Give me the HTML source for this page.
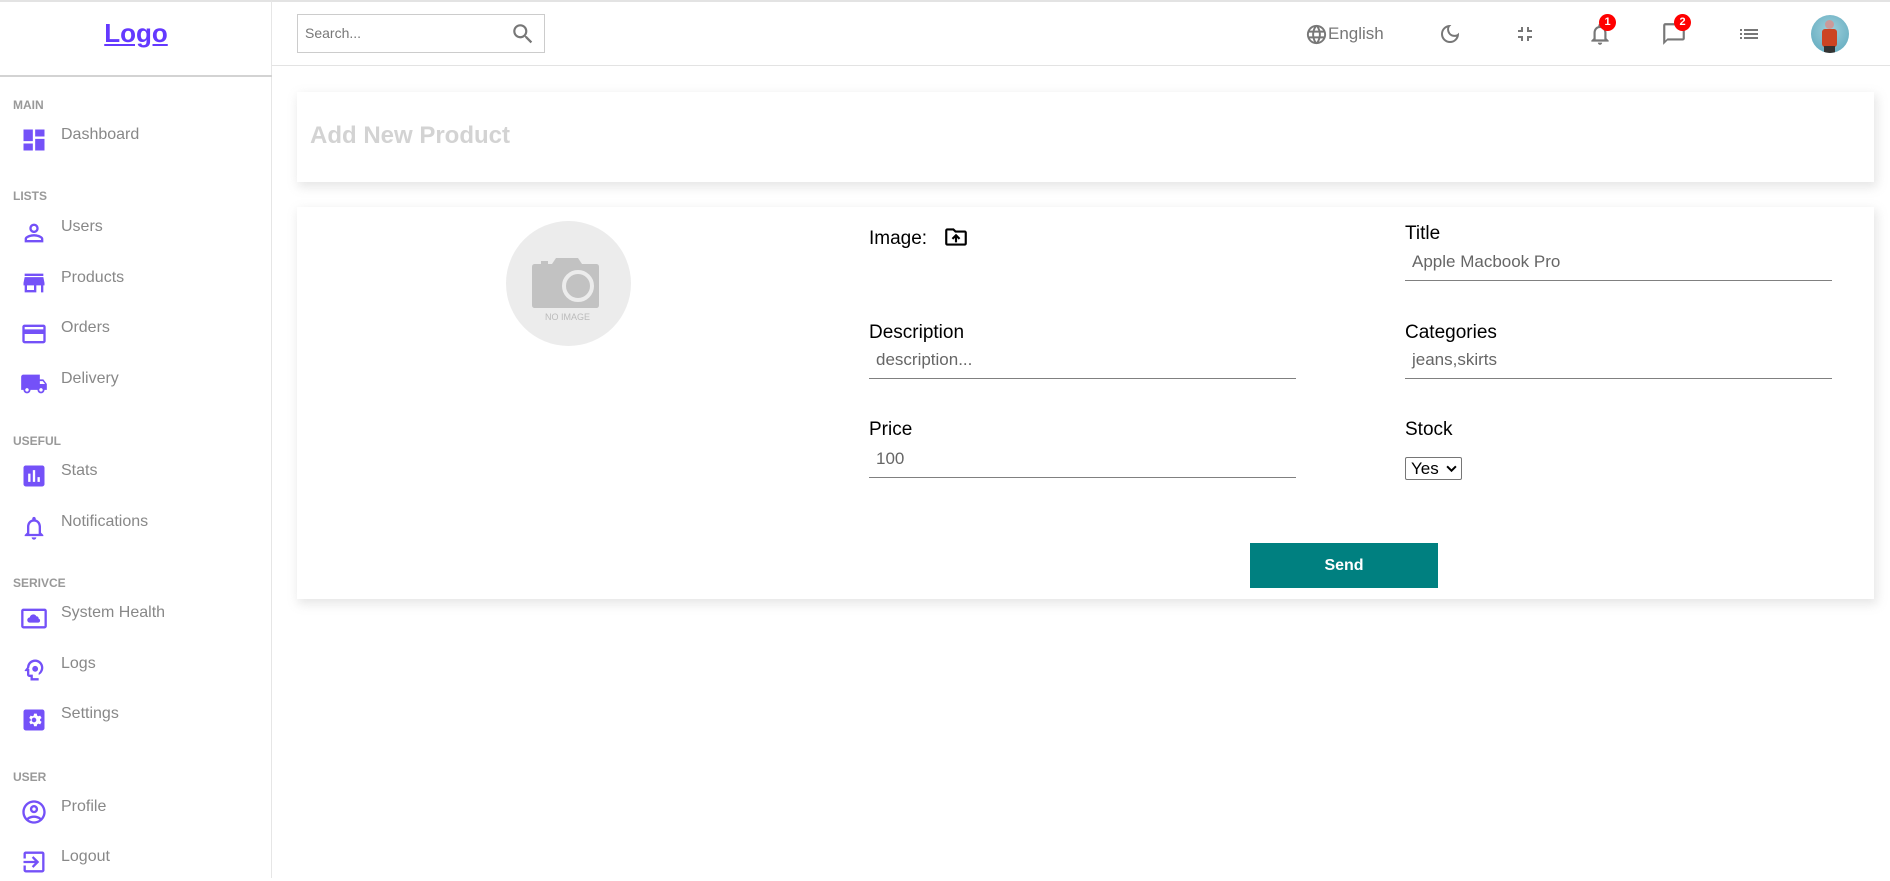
<!DOCTYPE html>
<html><head><meta charset="utf-8">
<style>
*{box-sizing:border-box;margin:0;padding:0}
body{width:1890px;height:878px;overflow:hidden;background:#fff;font-family:"Liberation Sans",sans-serif;position:relative}
.abs{position:absolute}
.sb{left:0;top:0;width:272px;height:878px;border-right:1px solid #e6e6e6;border-top:2px solid #e3e3e3}
.logo{left:0;width:272px;top:18px;text-align:center;font-size:26px;font-weight:bold;color:#6439ff;text-decoration:underline}
.sec{left:13px;font-size:12px;font-weight:bold;color:#999}
.item{left:61px;font-size:16px;color:#888}
.ic{left:20px;width:28px;height:28px}
.ic svg{width:28px;height:28px;fill:#7451f8}
.top{left:272px;top:0;width:1618px;height:66px;border-top:2px solid #e3e3e3;border-bottom:1px solid #e3e3e3}
.search{left:297px;top:14px;width:248px;height:39px;border:1px solid #ccc}
.tico svg{width:26px;height:26px;fill:#777}
.badge{width:17px;height:17px;border-radius:50%;background:#f00;color:#fff;font-size:11px;font-weight:bold;text-align:center;line-height:17px}
.card{background:#fff;box-shadow:2px 4px 10px 1px rgba(201,201,201,.47)}
.lbl{font-size:19px;color:#000}
.inp{font-size:17px;color:#666;width:427px;border-bottom:1px solid #808080;padding-left:7px;height:30px;line-height:22px}
</style></head><body>
<div class="abs sb"></div>
<div class="abs logo">Logo</div>
<div class="abs" style="left:0;top:75px;width:272px;height:2px;background:#d3d3d3"></div>

<div class="abs sec" style="top:98px">MAIN</div>
<div class="abs ic" style="top:126px"><svg viewBox="0 0 24 24"><path d="M3 13h8V3H3v10zm0 8h8v-6H3v6zm10 0h8V11h-8v10zm0-18v6h8V3h-8z"/></svg></div>
<div class="abs item" style="top:126px">Dashboard</div>

<div class="abs sec" style="top:189px">LISTS</div>
<div class="abs ic" style="top:219px"><svg viewBox="0 0 24 24"><path d="M12 6c1.1 0 2 .9 2 2s-.9 2-2 2-2-.9-2-2 .9-2 2-2m0 9c2.7 0 5.8 1.29 6 2v1H6v-.99c.2-.72 3.3-2.01 6-2.01M12 4C9.79 4 8 5.79 8 8s1.79 4 4 4 4-1.79 4-4-1.79-4-4-4zm0 9c-2.67 0-8 1.34-8 4v3h16v-3c0-2.66-5.33-4-8-4z"/></svg></div>
<div class="abs item" style="top:218px">Users</div>
<div class="abs ic" style="top:269px"><svg viewBox="0 0 24 24"><path d="M20 4H4v2h16V4zm1 10v-2l-1-5H4l-1 5v2h1v6h10v-6h4v6h2v-6h1zm-9 4H6v-4h6v4z"/></svg></div>
<div class="abs item" style="top:269px">Products</div>
<div class="abs ic" style="top:320px"><svg viewBox="0 0 24 24"><path d="M20 4H4c-1.11 0-1.99.89-1.99 2L2 18c0 1.11.89 2 2 2h16c1.11 0 2-.89 2-2V6c0-1.11-.89-2-2-2zm0 14H4v-6h16v6zm0-10H4V6h16v2z"/></svg></div>
<div class="abs item" style="top:319px">Orders</div>
<div class="abs ic" style="top:370px"><svg viewBox="0 0 24 24"><path d="M20 8h-3V4H3c-1.1 0-2 .9-2 2v11h2c0 1.66 1.34 3 3 3s3-1.34 3-3h6c0 1.66 1.34 3 3 3s3-1.34 3-3h2v-5l-3-4zM6 18.5c-.83 0-1.5-.67-1.5-1.5s.67-1.5 1.5-1.5 1.5.67 1.5 1.5-.67 1.5-1.5 1.5zm13.5-9l1.96 2.5H17V9.5h2.5zm-1.5 9c-.83 0-1.5-.67-1.5-1.5s.67-1.5 1.5-1.5 1.5.67 1.5 1.5-.67 1.5-1.5 1.5z"/></svg></div>
<div class="abs item" style="top:370px">Delivery</div>

<div class="abs sec" style="top:434px">USEFUL</div>
<div class="abs ic" style="top:462px"><svg viewBox="0 0 24 24"><path d="M19 3H5c-1.1 0-2 .9-2 2v14c0 1.1.9 2 2 2h14c1.1 0 2-.9 2-2V5c0-1.1-.9-2-2-2zM9 17H7v-7h2v7zm4 0h-2V7h2v10zm4 0h-2v-4h2v4z"/></svg></div>
<div class="abs item" style="top:462px">Stats</div>
<div class="abs ic" style="top:514px"><svg viewBox="0 0 24 24"><path d="M12 22c1.1 0 2-.9 2-2h-4c0 1.1.9 2 2 2zm6-6v-5c0-3.07-1.63-5.64-4.5-6.32V4c0-.83-.67-1.5-1.5-1.5s-1.5.67-1.5 1.5v.68C7.64 5.36 6 7.92 6 11v5l-2 2v1h16v-1l-2-2zm-2 1H8v-6c0-2.48 1.51-4.5 4-4.5s4 2.02 4 4.5v6z"/></svg></div>
<div class="abs item" style="top:513px">Notifications</div>

<div class="abs sec" style="top:576px">SERIVCE</div>
<div class="abs ic" style="top:604px"><svg viewBox="0 0 24 24"><path d="M21 4H3c-1.1 0-2 .9-2 2v13c0 1.1.9 2 2 2h18c1.1 0 2-.9 2-2V6c0-1.1-.9-2-2-2zm0 15H3V6h18v13zM16 12.5a2 2 0 0 0-2-2 3 3 0 0 0-5.6 1A2.2 2.2 0 0 0 8.5 16H15.5a1.8 1.8 0 0 0 .5-3.5z"/></svg></div>
<div class="abs item" style="top:604px">System Health</div>
<div class="abs ic" style="top:656px"><svg viewBox="0 0 24 24"><path d="M13 3C9.2 3 6.1 5.9 6 9.7L4.1 12.2c-.3.4 0 .8.4.8H6v3c0 1.1.9 2 2 2h1v3h7v-4.7c2.4-1.1 4-3.5 4-6.3 0-3.9-3.1-7-7-7zm0 10.5a2.5 2.5 0 1 1 0-5 2.5 2.5 0 0 1 0 5zM16 19h-5v-3H8v-5H7.2L8 9.9C8 7.2 10.3 5 13 5s5 2.2 5 5c0 2.1-1.3 3.9-2 4.6z"/></svg></div>
<div class="abs item" style="top:655px">Logs</div>
<div class="abs ic" style="top:706px"><svg viewBox="0 0 24 24"><path d="M19 3H5c-1.1 0-2 .9-2 2v14c0 1.1.9 2 2 2h14c1.1 0 2-.9 2-2V5c0-1.1-.9-2-2-2zm-1.8 9.6l1.3 1-1.2 2.1-1.5-.6c-.4.3-.8.5-1.2.7l-.2 1.6h-2.4l-.2-1.6c-.4-.2-.9-.4-1.2-.7l-1.5.6-1.2-2.1 1.3-1c-.1-.4-.1-.9 0-1.3l-1.3-1 1.2-2.1 1.5.6c.4-.3.8-.5 1.2-.7l.2-1.6h2.4l.2 1.6c.4.2.9.4 1.2.7l1.5-.6 1.2 2.1-1.3 1c.1.4.1.9 0 1.3zM12 10a2 2 0 1 0 0 4 2 2 0 0 0 0-4z"/></svg></div>
<div class="abs item" style="top:705px">Settings</div>

<div class="abs sec" style="top:770px">USER</div>
<div class="abs ic" style="top:798px"><svg viewBox="0 0 24 24"><path d="M12 2C6.48 2 2 6.48 2 12s4.48 10 10 10 10-4.48 10-10S17.52 2 12 2zM7.35 18.5C8.66 17.56 10.26 17 12 17s3.34.56 4.65 1.5C15.34 19.44 13.74 20 12 20s-3.34-.56-4.65-1.5zm10.79-1.38C16.45 15.8 14.32 15 12 15s-4.45.8-6.14 2.12A7.95 7.95 0 0 1 4 12c0-4.42 3.58-8 8-8s8 3.58 8 8c0 1.95-.7 3.73-1.86 5.12zM12 6c-1.93 0-3.5 1.57-3.5 3.5S10.07 13 12 13s3.5-1.57 3.5-3.5S13.93 6 12 6zm0 5c-.83 0-1.5-.67-1.5-1.5S11.17 8 12 8s1.5.67 1.5 1.5S12.83 11 12 11z"/></svg></div>
<div class="abs item" style="top:798px">Profile</div>
<div class="abs ic" style="top:848px"><svg viewBox="0 0 24 24"><path d="M10.09 15.59L11.5 17l5-5-5-5-1.41 1.41L12.67 11H3v2h9.67l-2.58 2.59zM19 3H5c-1.11 0-2 .9-2 2v4h2V5h14v14H5v-4H3v4c0 1.1.89 2 2 2h14c1.1 0 2-.9 2-2V5c0-1.1-.9-2-2-2z"/></svg></div>
<div class="abs item" style="top:848px">Logout</div>

<div class="abs top"></div>
<div class="abs search"><span class="abs" style="left:7px;top:10px;font-size:14px;color:#777">Search...</span>
<svg class="abs" style="left:212px;top:6px" width="26" height="26" viewBox="0 0 24 24"><path fill="#777" d="M15.5 14h-.79l-.28-.27A6.47 6.47 0 0 0 16 9.5 6.5 6.5 0 1 0 9.5 16c1.61 0 3.09-.59 4.23-1.57l.27.28v.79l5 4.99L20.49 19l-4.99-5zm-6 0C7.01 14 5 11.99 5 9.5S7.01 5 9.5 5 14 7.01 14 9.5 11.99 14 9.5 14z"/></svg></div>

<svg class="abs" style="left:1305px;top:23px" width="23" height="23" viewBox="0 0 24 24"><path fill="#777" d="M11.99 2C6.47 2 2 6.48 2 12s4.47 10 9.99 10C17.52 22 22 17.52 22 12S17.52 2 11.99 2zm6.93 6h-2.95a15.65 15.65 0 0 0-1.38-3.56A8.03 8.03 0 0 1 18.92 8zM12 4.04c.83 1.2 1.48 2.53 1.91 3.96h-3.82c.43-1.43 1.08-2.76 1.91-3.96zM4.26 14C4.1 13.36 4 12.69 4 12s.1-1.36.26-2h3.38c-.08.66-.14 1.32-.14 2s.06 1.34.14 2H4.26zm.82 2h2.95c.32 1.25.78 2.45 1.38 3.56A7.99 7.99 0 0 1 5.08 16zm2.95-8H5.08a7.99 7.99 0 0 1 4.33-3.56A15.65 15.65 0 0 0 8.03 8zM12 19.96c-.83-1.2-1.48-2.53-1.91-3.96h3.82c-.43 1.43-1.08 2.76-1.91 3.96zM14.34 14H9.66c-.09-.66-.16-1.32-.16-2s.07-1.35.16-2h4.68c.09.65.16 1.32.16 2s-.07 1.34-.16 2zm.25 5.56c.6-1.11 1.06-2.31 1.38-3.56h2.95a8.03 8.03 0 0 1-4.33 3.56zM16.36 14c.08-.66.14-1.32.14-2s-.06-1.34-.14-2h3.38c.16.64.26 1.31.26 2s-.1 1.36-.26 2h-3.38z"/></svg>
<div class="abs" style="left:1328px;top:24px;font-size:17px;color:#777">English</div>
<svg class="abs" style="left:1438px;top:22px" width="24" height="24" viewBox="0 0 24 24"><path fill="#777" d="M9.37 5.51A7.35 7.35 0 0 0 9.1 7.5c0 4.08 3.32 7.4 7.4 7.4.68 0 1.35-.09 1.99-.27A7.01 7.01 0 0 1 12 19c-3.86 0-7-3.14-7-7 0-2.93 1.81-5.45 4.37-6.49zM12 3a9 9 0 1 0 9 9c0-.46-.04-.92-.1-1.36a5.39 5.39 0 0 1-4.4 2.26 5.4 5.4 0 0 1-3.14-9.8c-.44-.06-.9-.1-1.36-.1z"/></svg>
<svg class="abs" style="left:1513px;top:22px" width="24" height="24" viewBox="0 0 24 24"><path fill="#777" d="M5 16h3v3h2v-5H5v2zm3-8H5v2h5V5H8v3zm6 11h2v-3h3v-2h-5v5zm2-11V5h-2v5h5V8h-3z"/></svg>
<svg class="abs" style="left:1587px;top:21px" width="26" height="26" viewBox="0 0 24 24"><path fill="#777" d="M12 22c1.1 0 2-.9 2-2h-4c0 1.1.9 2 2 2zm6-6v-5c0-3.07-1.63-5.64-4.5-6.32V4c0-.83-.67-1.5-1.5-1.5s-1.5.67-1.5 1.5v.68C7.64 5.36 6 7.92 6 11v5l-2 2v1h16v-1l-2-2zm-2 1H8v-6c0-2.48 1.51-4.5 4-4.5s4 2.02 4 4.5v6z"/></svg>
<div class="abs badge" style="left:1599px;top:14px">1</div>
<svg class="abs" style="left:1661px;top:21px" width="26" height="26" viewBox="0 0 24 24"><path fill="#777" d="M20 2H4c-1.1 0-2 .9-2 2v18l4-4h14c1.1 0 2-.9 2-2V4c0-1.1-.9-2-2-2zm0 14H6l-2 2V4h16v12z"/></svg>
<div class="abs badge" style="left:1674px;top:14px">2</div>
<svg class="abs" style="left:1737px;top:22px" width="24" height="24" viewBox="0 0 24 24"><path fill="#777" d="M3 13h2v-2H3v2zm0 4h2v-2H3v2zm0-8h2V7H3v2zm4 4h14v-2H7v2zm0 4h14v-2H7v2zM7 7v2h14V7H7z"/></svg>
<div class="abs" style="left:1811px;top:15px;width:38px;height:38px;border-radius:50%;background:radial-gradient(circle at 50% 40%,#9fd0dc,#5aa6bb);overflow:hidden">
<div class="abs" style="left:14px;top:5px;width:9px;height:9px;border-radius:50%;background:#c99"></div>
<div class="abs" style="left:11px;top:14px;width:15px;height:18px;background:#c42;border-radius:3px"></div>
<div class="abs" style="left:13px;top:31px;width:11px;height:8px;background:#333"></div></div>

<div class="abs card" style="left:297px;top:92px;width:1577px;height:90px"></div>
<div class="abs" style="left:310px;top:122px;font-size:24px;font-weight:bold;color:#d3d3d3">Add New Product</div>

<div class="abs card" style="left:297px;top:207px;width:1577px;height:392px"></div>
<div class="abs" style="left:506px;top:221px;width:125px;height:125px;border-radius:50%;background:#ececec"></div>
<svg class="abs" style="left:532px;top:256px" width="70" height="56" viewBox="0 0 70 56"><path fill="#c2c2c2" d="M3 8h6V5h7v3h4l4-6h22l4 6h14c2 0 3 1 3 3v38c0 2-1 3-3 3H3c-2 0-3-1-3-3V11c0-2 1-3 3-3z"/><circle cx="46" cy="30" r="14" fill="#c2c2c2" stroke="#ececec" stroke-width="4"/></svg>
<div class="abs" style="left:545px;top:312px;font-size:9px;color:#bbb">NO IMAGE</div>

<div class="abs lbl" style="left:869px;top:228px">Image:</div>
<svg class="abs" style="left:942px;top:224px" width="28" height="26" viewBox="0 0 24 24"><path fill="#000" d="M20 6h-8l-2-2H4c-1.1 0-2 .9-2 2v12c0 1.1.9 2 2 2h16c1.1 0 2-.9 2-2V8c0-1.1-.9-2-2-2zm0 12H4V6h5.17l2 2H20v10zM9.41 14.42L11 12.84V17h2v-4.16l1.59 1.59L16 13.01 12.01 9 8 13.01l1.41 1.41z"/></svg>

<div class="abs lbl" style="left:1405px;top:223px">Title</div>
<div class="abs inp" style="left:1405px;top:251px">Apple Macbook Pro</div>

<div class="abs lbl" style="left:869px;top:322px">Description</div>
<div class="abs inp" style="left:869px;top:349px">description...</div>
<div class="abs lbl" style="left:1405px;top:322px">Categories</div>
<div class="abs inp" style="left:1405px;top:349px">jeans,skirts</div>

<div class="abs lbl" style="left:869px;top:419px">Price</div>
<div class="abs inp" style="left:869px;top:448px">100</div>
<div class="abs lbl" style="left:1405px;top:419px">Stock</div>
<div class="abs" style="left:1405px;top:457px;width:57px;height:23px;border:1px solid #767676;border-radius:2px;font-size:17px;color:#000;padding-left:5px;line-height:21px">Yes
<svg class="abs" style="left:40px;top:6px" width="11" height="9" viewBox="0 0 10 8"><path d="M1 2l4 4 4-4" stroke="#000" stroke-width="1.8" fill="none"/></svg></div>

<div class="abs" style="left:1250px;top:543px;width:188px;height:45px;background:#008080;color:#fff;font-weight:bold;font-size:16px;text-align:center;line-height:45px">Send</div>
</body></html>
